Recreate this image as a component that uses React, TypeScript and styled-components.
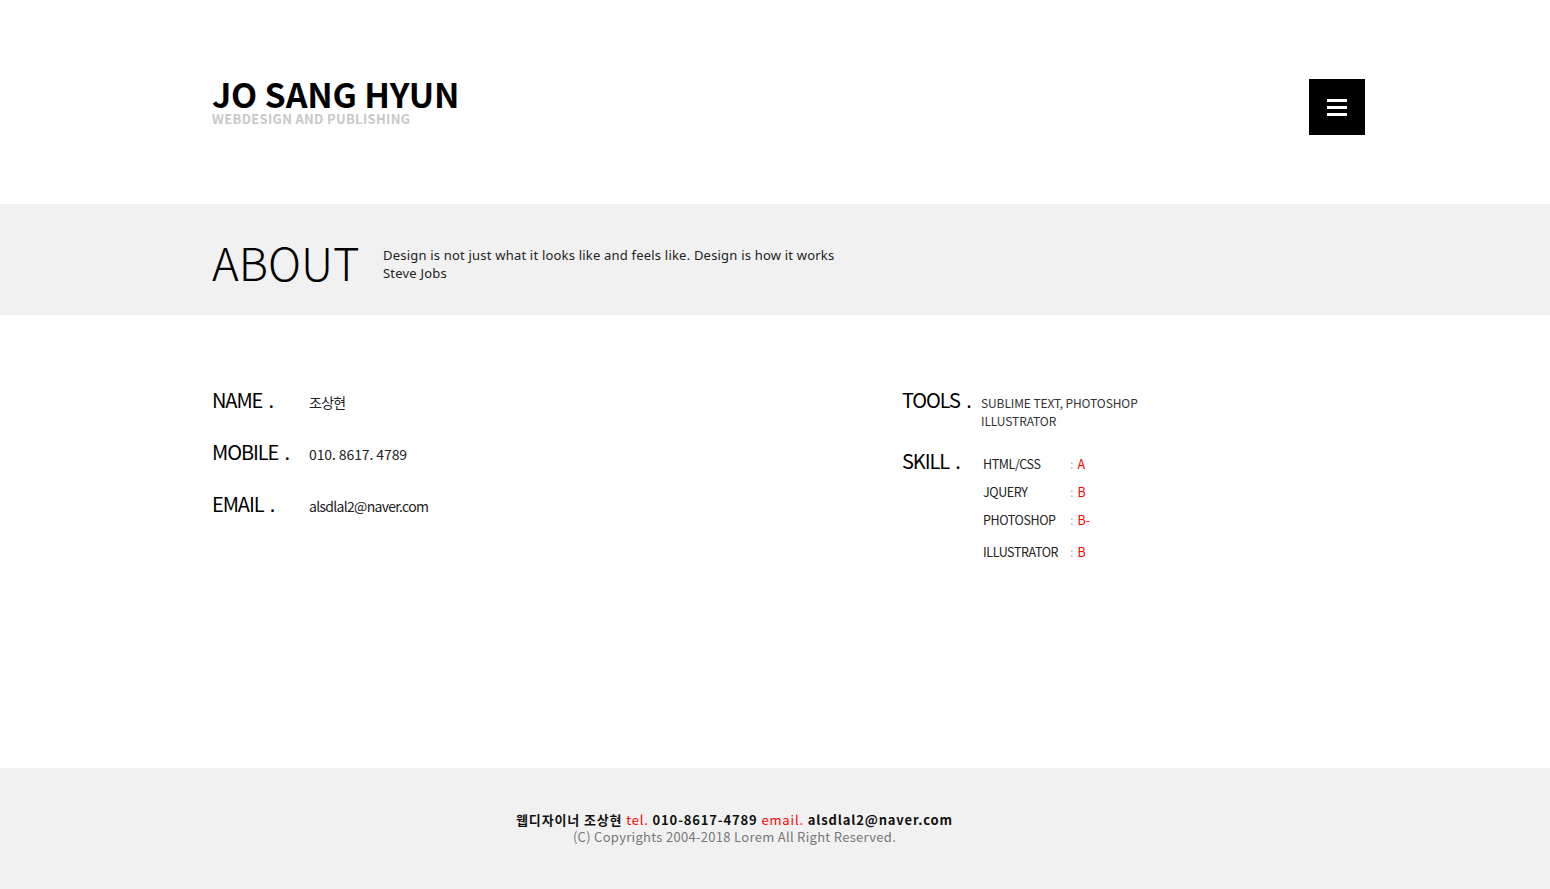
import React from "react";
import styled, { createGlobalStyle } from "styled-components";

const Global = createGlobalStyle`
  html, body { margin: 0; padding: 0; background: #fff; }
  body { font-family: "Noto Sans", "Noto Sans CJK KR", sans-serif; color: #111; }
  * { box-sizing: border-box; }
`;

const Container = styled.div`
  width: 1180px;
  margin: 0 auto;
  padding-left: 27px;
`;

const Header = styled.header`
  height: 204px;
  background: #fff;
`;

const HeaderInner = styled(Container)`
  display: flex;
  justify-content: space-between;
  align-items: flex-start;
  padding-top: 76px;
`;

const Brand = styled.div`
  display: flex;
  flex-direction: column;
`;

const Title = styled.h1`
  margin: 0;
  font-family: "Noto Sans CJK KR", "Noto Sans", sans-serif;
  font-size: 34px;
  font-weight: 700;
  line-height: 36px;
  letter-spacing: -0.2px;
  color: #000;
`;

const Subtitle = styled.div`
  font-family: "Noto Sans CJK KR", sans-serif;
  font-size: 13px;
  font-weight: 700;
  line-height: 14px;
  color: #c8c8c8;
  margin-top: 0;
  letter-spacing: 0.3px;
`;

const MenuButton = styled.button`
  width: 56px;
  height: 56px;
  margin-top: 3px;
  background: #000;
  border: 0;
  padding: 0;
  display: flex;
  flex-direction: column;
  align-items: center;
  justify-content: center;
  gap: 4px;
  cursor: pointer;
`;

const Bar = styled.span`
  display: block;
  width: 20px;
  height: 3px;
  background: #fff;
`;

const AboutBand = styled.section`
  height: 111px;
  background: #f1f1f1;
`;

const AboutInner = styled(Container)`
  display: flex;
  align-items: center;
  height: 100%;
  padding-top: 2px;
`;

const AboutTitle = styled.h2`
  margin: 0;
  font-family: "Noto Sans CJK KR", sans-serif;
  font-size: 45.5px;
  font-weight: 300;
  letter-spacing: 0;
  color: #000;
  width: 171px;
  line-height: 60px;
`;

const Quote = styled.p`
  margin: 6px 0 0 0;
  font-family: "Noto Sans", sans-serif;
  font-size: 13px;
  line-height: 18px;
  color: #222;
  letter-spacing: 0.2px;
`;

const Main = styled.main`
  height: 453px;
`;

const MainInner = styled(Container)`
  display: flex;
  padding-top: 70px;
`;

const Column = styled.div<{ $width?: number }>`
  width: ${(p) => (p.$width ? `${p.$width}px` : "auto")};
  display: flex;
  flex-direction: column;
`;

const InfoRow = styled.div<{ $gap?: number }>`
  display: flex;
  align-items: baseline;
  margin-bottom: ${(p) => p.$gap ?? 0}px;
`;

const Label = styled.div<{ $width: number }>`
  width: ${(p) => p.$width}px;
  flex-shrink: 0;
  font-family: "Noto Sans CJK KR", sans-serif;
  font-size: 20px;
  letter-spacing: -1.1px;
  word-spacing: 3px;
  line-height: 30px;
  color: #000;
`;

const Value = styled.div<{ $ls?: number }>`
  font-family: "Noto Sans CJK KR", sans-serif;
  font-size: 14px;
  letter-spacing: ${(p) => p.$ls ?? -0.7}px;
  color: #222;
`;

const ToolsValue = styled.div`
  font-family: "Noto Sans CJK KR", sans-serif;
  font-size: 12px;
  line-height: 18px;
  color: #333;
  text-transform: uppercase;
  letter-spacing: -0.1px;
  margin-top: -7px;
`;

const SkillList = styled.ul`
  list-style: none;
  margin: 0;
  padding: 0 0 0 2px;
  display: flex;
  flex-direction: column;
`;

const SkillItem = styled.li<{ $h: number }>`
  display: flex;
  height: ${(p) => p.$h}px;
  align-items: center;
  font-family: "Noto Sans CJK KR", sans-serif;
  font-size: 12.5px;
  color: #222;
`;

const SkillName = styled.span`
  width: 87px;
  letter-spacing: -0.4px;
`;

const Colon = styled.span`
  color: #bbb;
  margin-right: 4px;
`;

const Grade = styled.span`
  color: #ff0000;
`;

const Footer = styled.footer`
  height: 121px;
  background: #f1f1f1;
  display: flex;
  flex-direction: column;
  align-items: center;
  padding-top: 42px;
  padding-right: 81px;
`;

const FooterLine = styled.div`
  font-family: "Noto Sans CJK KR", sans-serif;
  font-size: 13px;
  font-weight: 700;
  line-height: 19px;
  letter-spacing: 0.85px;
  color: #111;
`;

const Red = styled.span`
  color: #ff0000;
  font-weight: 400;
`;

const Copy = styled.div`
  font-family: "Noto Sans CJK KR", sans-serif;
  font-size: 13px;
  line-height: 16px;
  letter-spacing: 0.3px;
  color: #777;
`;

const skills: { name: string; grade: string; h: number }[] = [
  { name: "HTML/CSS", grade: "A", h: 28 },
  { name: "JQUERY", grade: "B", h: 28 },
  { name: "PHOTOSHOP", grade: "B-", h: 28 },
  { name: "ILLUSTRATOR", grade: "B", h: 36 },
];

export default function App() {
  return (
    <>
      <Global />
      <Header>
        <HeaderInner>
          <Brand>
            <Title>JO SANG HYUN</Title>
            <Subtitle>WEBDESIGN AND PUBLISHING</Subtitle>
          </Brand>
          <MenuButton aria-label="menu">
            <Bar />
            <Bar />
            <Bar />
          </MenuButton>
        </HeaderInner>
      </Header>
      <AboutBand>
        <AboutInner>
          <AboutTitle>ABOUT</AboutTitle>
          <Quote>
            Design is not just what it looks like and feels like. Design is how it works
            <br />
            Steve Jobs
          </Quote>
        </AboutInner>
      </AboutBand>
      <Main>
        <MainInner>
          <Column $width={690}>
            <InfoRow $gap={22}>
              <Label $width={97}>NAME .</Label>
              <Value>조상현</Value>
            </InfoRow>
            <InfoRow $gap={22}>
              <Label $width={97}>MOBILE .</Label>
              <Value $ls={-0.1}>010. 8617. 4789</Value>
            </InfoRow>
            <InfoRow>
              <Label $width={97}>EMAIL .</Label>
              <Value>alsdlal2@naver.com</Value>
            </InfoRow>
          </Column>
          <Column>
            <InfoRow $gap={16}>
              <Label $width={79}>TOOLS .</Label>
              <ToolsValue>
                SUBLIME TEXT, PHOTOSHOP
                <br />
                ILLUSTRATOR
              </ToolsValue>
            </InfoRow>
            <InfoRow>
              <Label $width={79}>SKILL .</Label>
              <SkillList>
                {skills.map((s) => (
                  <SkillItem key={s.name} $h={s.h}>
                    <SkillName>{s.name}</SkillName>
                    <Colon>:</Colon>
                    <Grade>{s.grade}</Grade>
                  </SkillItem>
                ))}
              </SkillList>
            </InfoRow>
          </Column>
        </MainInner>
      </Main>
      <Footer>
        <FooterLine>
          웹디자이너 조상현 <Red>tel.</Red> 010-8617-4789 <Red>email.</Red> alsdlal2@naver.com
        </FooterLine>
        <Copy>(C) Copyrights 2004-2018 Lorem All Right Reserved.</Copy>
      </Footer>
    </>
  );
}
